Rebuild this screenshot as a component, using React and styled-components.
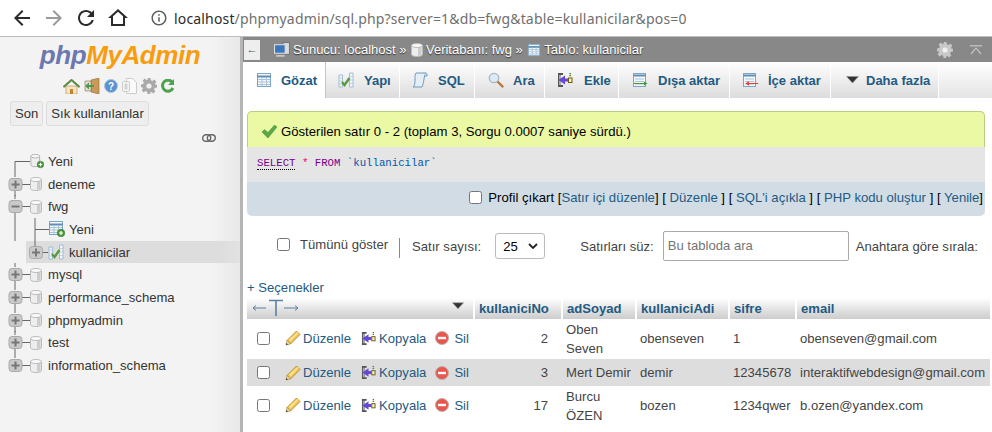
import { createGlobalStyle, styled } from "styled-components";

const Global = createGlobalStyle`
    html, body { margin: 0; padding: 0; background: #fff; }
    * { box-sizing: border-box; }
    #root { width: 992px; height: 432px; overflow: hidden; }
`;

const Page = styled.div`
    width: 992px;
    height: 432px;
    overflow: hidden;
    display: flex;
    flex-direction: column;
    font-family: "Liberation Sans", Arial, sans-serif;
    font-size: 13.1px;
    color: #444;
`;

const BrowserBar = styled.div`
    height: 37px;
    flex: none;
    display: flex;
    align-items: center;
    padding-left: 10px;
    background: #fff;
    border-bottom: 1px solid #bdbdbd;
`;

const NavIcon = styled.svg`
    width: ${p => p.$size}px;
    height: ${p => p.$size}px;
    margin-right: ${p => p.$gap}px;
    fill: ${p => p.$color || "#2b2b2b"};
    flex: none;
`;

const Address = styled.div`
    font-family: "Noto Sans", sans-serif;
    font-size: 14px;
    letter-spacing: 0.16px;
    color: #6f6f6f;
    white-space: nowrap;
    b { font-weight: 400; color: #2b2b2b; }
`;

const Body = styled.div`
    flex: 1;
    display: flex;
    min-height: 0;
`;

const Sidebar = styled.aside`
    width: 240px;
    flex: none;
    background: linear-gradient(to right, #f3f3f3 88%, #e8e8e8 100%);
    display: flex;
    flex-direction: column;
`;

const Logo = styled.div`
    text-align: center;
    font-size: 26px;
    font-weight: 700;
    font-style: italic;
    line-height: 30px;
    margin-top: 3px;
    letter-spacing: -0.4px;
    color: #f89c0e;
    span { color: #6c78af; }
`;

const QuickIcons = styled.div`
    display: flex;
    justify-content: center;
    align-items: center;
    gap: 4px;
    height: 20px;
    margin: 6px 4px 0 0;
    svg { flex: none; }
`;

const RecentRow = styled.div`
    display: flex;
    gap: 3px;
    padding: 5px 0 0 10px;
`;

const RecentButton = styled.div`
    height: 25px;
    line-height: 23px;
    padding: 0 4px;
    border: 1px solid #ddd;
    border-radius: 3px;
    background: #eee;
    color: #333;
`;

const LinkRow = styled.div`
    display: flex;
    justify-content: flex-end;
    padding: 8px 24px 0 0;
    height: 20px;
`;

const Tree = styled.div`
    margin-top: 4px;
`;

const TreeRow = styled.div`
    height: 22.7px;
    display: flex;
    align-items: center;
    color: #333;
    background: ${p => (p.$selected ? "linear-gradient(to right, #ddd 90%, #e2e2e2)" : "transparent")};
    margin-left: ${p => (p.$selected ? 26 : 0)}px;
`;

const Gutter = styled.svg`
    display: block;
    flex: none;
    height: 23px;
    width: ${p => p.width}px;
`;

const Label = styled.span`
    margin-left: ${p => p.$left}px;
`;

const Splitter = styled.div`
    width: 3px;
    flex: none;
    background: #b5b5b5;
`;

const Main = styled.main`
    flex: 1;
    min-width: 0;
    background: #fff;
    display: flex;
    flex-direction: column;
`;

const TopBar = styled.div`
    height: 25px;
    flex: none;
    background: #888;
    display: flex;
    align-items: center;
    color: #fff;
    font-size: 13px;
    text-shadow: 0 1px 1px #333;
`;

const BackBtn = styled.div`
    width: 16px;
    height: 20px;
    margin: 0 14px 0 1px;
    background: #eee;
    color: #555;
    text-shadow: none;
    text-align: center;
    line-height: 19px;
    font-size: 11px;
`;

const Crumb = styled.span`
    display: inline-flex;
    align-items: center;
    gap: 3px;
    margin-right: 4.5px;
    white-space: nowrap;
`;

const TopRight = styled.div`
    margin-left: auto;
    display: flex;
    align-items: center;
    gap: 17px;
    padding-right: 10px;
`;

const Tabs = styled.nav`
    height: 36px;
    flex: none;
    display: flex;
    background: linear-gradient(#fff, #e4e4e4);
`;

const Tab = styled.div`
    height: 36px;
    width: ${p => p.$w}px;
    flex: none;
    display: flex;
    align-items: center;
    padding-left: ${p => p.$left}px;
    gap: ${p => p.$gap}px;
    font-size: 13px;
    font-weight: 700;
    color: #235a81;
    white-space: nowrap;
    background: ${p => (p.$active ? "#fff" : "linear-gradient(#fff, #dcdcdc)")};
    border-right: ${p => (p.$active ? "1px solid #c4c4c4" : "1px solid #fff")};
`;

const Content = styled.div`
    padding: 13px 7px 0 4px;
    flex: 1;
`;

const Notice = styled.div`
    height: 36px;
    display: flex;
    align-items: center;
    gap: 4px;
    padding: 4px 0 0 14px;
    background: #ebf8a4;
    border: 1px solid #b9cc84;
    border-bottom: none;
    border-radius: 5px 5px 0 0;
    color: #000;
    font-size: 13.15px;
`;

const SqlBox = styled.div`
    height: 35px;
    padding: 9px 0 0 10px;
    background: #e5e5e5;
    font-family: "Liberation Mono", monospace;
    font-size: 10.7px;
    line-height: 14px;
    color: #000;
    white-space: pre;
`;

const Keyword = styled.span`
    color: #708;
    ${p => p.$dotted && "border-bottom: 1px dotted #000;"}
`;

const Star = styled.span`color: #e06;`;
const Quoted = styled.span`color: #05a;`;

const SqlLinks = styled.div`
    height: 34px;
    display: flex;
    align-items: center;
    justify-content: flex-end;
    gap: 6px;
    padding: 0 2px 4px 0;
    background: #d1dce5;
    border-radius: 0 0 5px 5px;
    color: #000;
    font-size: 13.15px;
    white-space: nowrap;
    a { color: #235a81; }
`;

const Check = styled.span`
    display: inline-block;
    width: 13px;
    height: 13px;
    flex: none;
    border: 1px solid #767676;
    border-radius: 2.5px;
    background: #fff;
`;

const Filters = styled.div`
    display: flex;
    align-items: center;
    height: 60px;
    padding-left: 30px;
    white-space: nowrap;
`;

const FilterGroup = styled.div`
    display: flex;
    align-items: center;
    gap: ${p => p.$gap}px;
    margin-left: ${p => p.$before || 0}px;
    margin-right: ${p => p.$after}px;
    margin-bottom: ${p => p.$lift || 0}px;
`;

const VLine = styled.span`
    width: 1px;
    height: 20px;
    margin-top: 3px;
    background: #888;
`;

const Select = styled.div`
    width: 50px;
    height: 26px;
    border: 1px solid #bbb;
    border-radius: 3px;
    display: flex;
    align-items: center;
    justify-content: space-between;
    padding: 0 6px 0 7px;
    color: #000;
`;

const SearchInput = styled.div`
    width: 186px;
    height: 30px;
    line-height: 28px;
    padding-left: 4px;
    border: 1px solid #aaa;
    border-radius: 2px;
    color: #757575;
`;

const Options = styled.div`
    height: 22px;
    line-height: 24px;
    color: #235a81;
`;

const Grid = styled.table`
    border-collapse: collapse;
    table-layout: fixed;
    width: 743px;
    color: #444;
`;

const Col = styled.col`
    width: ${p => (p.$w ? `${p.$w}px` : "auto")};
`;

const Th = styled.th`
    height: 21px;
    padding: 0 0 1px ${p => p.$pad ?? 4}px;
    text-align: left;
    font-weight: 700;
    color: #235a81;
    background: linear-gradient(#fff, #ccc);
    border-right: 2px solid #fff;
    &:last-child { border-right: none; }
`;

const Row = styled.tr`
    height: ${p => p.$h}px;
    background: ${p => (p.$odd ? "#ddd" : "#fff")};
`;

const Td = styled.td`
    padding: 0 ${p => (p.$num ? 14 : 0)}px ${p => (p.$lift ? 2 : 0)}px ${p => p.$pad ?? 4}px;
    line-height: 19px;
    text-align: ${p => (p.$num ? "right" : "left")};
    white-space: nowrap;
`;

const Actions = styled.div`
    display: flex;
    align-items: center;
    padding-left: 10px;
    color: #235a81;
`;

const Action = styled.span`
    display: inline-flex;
    align-items: center;
    gap: ${p => p.$gap}px;
    margin-left: ${p => p.$left}px;
`;

const ColTools = styled.div`
    display: flex;
    align-items: center;
    justify-content: space-between;
    padding: 0 9px 0 5px;
`;

const Sorter = styled.span`
    display: flex;
    margin-bottom: 5px;
`;

/* drawings */

const NAV = {
    back: "M20 11H7.83l5.59-5.59L12 4l-8 8 8 8 1.41-1.41L7.83 13H20v-2z",
    forward: "M4 11h12.17l-5.59-5.59L12 4l8 8-8 8-1.41-1.41L16.17 13H4v-2z",
    reload: "M17.65 6.35C16.2 4.9 14.21 4 12 4c-4.42 0-7.99 3.58-7.99 8s3.57 8 7.99 8c3.73 0 6.84-2.55 7.73-6h-2.08c-.82 2.33-3.04 4-5.65 4-3.31 0-6-2.69-6-6s2.69-6 6-6c1.66 0 3.14.69 4.22 1.78L13 11h7V4l-2.35 2.35z",
    home: "M12 5.69l5 4.5V18H7v-7.81l5-4.5M12 3L2 12h3v8h14v-8h3L12 3z",
    info: "M11 7h2v2h-2zm0 4h2v6h-2zm1-9C6.48 2 2 6.48 2 12s4.48 10 10 10 10-4.48 10-10S17.52 2 12 2zm0 18c-4.41 0-8-3.59-8-8s3.59-8 8-8 8 3.59 8 8-3.59 8-8 8z",
};

const Nav = ({ name, gap, color, size = 24 }) => (
    <NavIcon viewBox="0 0 24 24" $size={size} $gap={gap} $color={color}><path d={NAV[name]} /></NavIcon>
);

const Db = ({ size = 12 }) => (
    <svg width={size} height={size + 2} viewBox="0 0 12 14">
        <path d="M.5 2.5v9c0 1.2 2.4 2 5.5 2s5.500-.8 5.500-2v-9z" fill="#eee" stroke="#bbb" />
        <path d="M7 3.500h3.500v8.500l-3.500 1z" fill="#ccc" />
        <ellipse cx="6" cy="2.500" rx="5.500" ry="2" fill="#fafafa" stroke="#bbb" />
    </svg>
);

const PlusBadge = () => (
    <g>
        <circle cx="12" cy="12" r="3.800" fill="#4d9a3c" stroke="#2e6e22" strokeWidth=".5" />
        <path d="M12 10v4M10 12h4" stroke="#fff" strokeWidth="1.200" />
    </g>
);

const TableIcon = ({ size = 16 }) => (
    <svg width={size} height={size} viewBox="0 0 16 16">
        <rect x="1.500" y="1.500" width="13" height="13" fill="#f4f8fb" stroke="#7da5c4" />
        <path d="M1.500 4.500h13" stroke="#5d8fb5" strokeWidth="2" />
        <path d="M2 7.500h12M2 10h12M2 12.500h12M6 5v9M10.500 5v9" stroke="#a9c3d8" />
    </svg>
);

const TableNew = () => (
    <svg width="16" height="16" viewBox="0 0 16 16">
        <rect x=".500" y=".500" width="13" height="13" fill="#f4f8fb" stroke="#7da5c4" />
        <path d="M.500 3.500h13" stroke="#5d8fb5" strokeWidth="2" />
        <path d="M1 6.500h12M1 9h12M1 11.500h12M5 4v9M9.500 4v9" stroke="#a9c3d8" />
        <PlusBadge />
    </svg>
);

const DbNew = () => (
    <svg width="14" height="16" viewBox="0 0 16 16">
        <path d="M1 2.500v10c0 1.200 2.200 2 5 2s5-.8 5-2v-10z" fill="#eee" stroke="#aaa" />
        <ellipse cx="6" cy="2.500" rx="5" ry="2" fill="#fafafa" stroke="#aaa" />
        <PlusBadge />
    </svg>
);

const Structure = ({ size = 16 }) => (
    <svg width={size} height={size} viewBox="0 0 16 16">
        <path d="M1 3h3.500v12H1zM11.500 1H15v14h-3.500z" fill="#f2f6fa" stroke="#8fb2cd" strokeWidth=".8" />
        <path d="M1 6h3.500M1 9h3.500M1 12h3.500M11.500 4.500H15M11.500 8H15M11.500 11.500H15" stroke="#b3cadb" strokeWidth=".8" />
        <path d="M4 10l2.500 3L11.500 6" fill="none" stroke="#5b9a3f" strokeWidth="2.400" />
    </svg>
);

const Scroll = () => (
    <svg width="17" height="16" viewBox="0 0 17 16">
        <path d="M4 1h10c-1 1-1.500 3-2 6s-1 6-2 8H1c1.500-1 2-3 2-7s0-6 1-7z" fill="#e4eef6" stroke="#6f9bbd" />
        <path d="M13.500 1c1 0 2 1 1.500 3h-2.500" fill="#cfe0ec" stroke="#6f9bbd" />
    </svg>
);

const Magnifier = () => (
    <svg width="16" height="16" viewBox="0 0 16 16">
        <path d="M9.500 9.500l5 5" stroke="#b5763f" strokeWidth="2.400" strokeLinecap="round" />
        <circle cx="6" cy="6" r="4.700" fill="#dcebf6" stroke="#a7b6c2" strokeWidth="1.300" />
    </svg>
);

const InsertIcon = ({ size = 16 }) => (
    <svg width={size} height={size} viewBox="0 0 16 16">
        <path d="M1 1h5v2H4v10h2v2H1z" fill="#555" />
        <path d="M2 3h2v10H2z" fill="#aaa" />
        <path d="M1.500 8L8 3.500V6.500h3v3H8v3z" fill="#6548d6" />
        <rect x="11.500" y="6" width="3.500" height="4.500" fill="#f7efc0" stroke="#6b5c10" />
        <path d="M13.200 1v3.500" stroke="#3f7f2a" strokeWidth="1.500" strokeDasharray="1.200 .8" />
    </svg>
);

const ExportIcon = ({ arrow, back }) => (
    <svg width="16" height="16" viewBox="0 0 16 16">
        <rect x="1.500" y="1.500" width="12" height="13" fill="#f4f8fb" stroke="#7da5c4" />
        <path d="M1.500 3.500h12" stroke="#5d8fb5" strokeWidth="2" />
        <path d="M3 7h9M3 9.500h9M3 12h9" stroke="#a9c3d8" />
        {back
            ? <path d="M16 11H7V9.200L3.500 11.500 7 13.800V12h9z" fill={arrow} />
            : <path d="M2 11h10V9.500l3.500 2-3.500 2V12H2z" fill={arrow} />}
    </svg>
);

const Triangle = ({ w = 13 }) => (
    <svg width={w} height="8" viewBox="0 0 13 8">
        <path d="M.5 .5h12L6.500 7z" fill="#333" stroke="#999" strokeWidth=".6" />
    </svg>
);

const Pencil = () => (
    <svg width="16" height="16" viewBox="0 0 16 16">
        <path d="M2 10.500L11.500 1l3.500 3.500L5.500 14z" fill="#f2c44e" stroke="#a9802a" strokeWidth=".8" />
        <path d="M4 9.500L12.500 2l1 1L5.500 11.500z" fill="#fbe393" />
        <path d="M1 15l1-4.500 3.500 3.500z" fill="#ecdcbc" stroke="#a9802a" strokeWidth=".6" />
        <path d="M1 15l.5-2 1.500 1.500z" fill="#333" />
    </svg>
);

const Minus = () => (
    <svg width="14" height="14" viewBox="0 0 14 14">
        <circle cx="7" cy="7" r="6.500" fill="#e8574d" stroke="#b9b0ae" />
        <rect x="3" y="5.800" width="8" height="2.400" fill="#fff" />
    </svg>
);

const CheckMark = () => (
    <svg width="15" height="13" viewBox="0 0 15 13">
        <path d="M0 7l2.500-2.500L6 7.500 12.500 0 15 2 6 13z" fill="#5aa846" stroke="#468a36" strokeWidth=".5" />
    </svg>
);

const Cog = ({ fill = "#bbb", size = 16 }) => (
    <svg width={size} height={size} viewBox="0 0 16 16">
        <path d="M6.500 0h3l.4 2.300 1.500.6L13.300 1.600l2.100 2.100-1.300 1.900.6 1.500L16 6.500v3l-2.300.4-.6 1.500 1.300 1.900-2.100 2.100-1.900-1.300-1.500.6L9.500 16h-3l-.4-2.300-1.500-.6-1.900 1.300-2.100-2.100 1.300-1.900-.6-1.500L0 9.500v-3l2.300-.4.600-1.500L1.600 2.700l2.100-2.100 1.900 1.300 1.500-.6z" fill={fill} />
        <circle cx="8" cy="8" r="2.600" fill="#f0f0f0" />
    </svg>
);

const Quick = {
    home: (
        <svg width="17" height="15" viewBox="0 0 17 15">
            <path d="M3 7h11v8H3z" fill="#f4e5c2" stroke="#b0884c" strokeWidth=".6" />
            <path d="M7 10h3v5H7z" fill="#c9812c" />
            <path d="M8.500 0L0 7.500l1 1 7.500-6.500L16 8.500l1-1z" fill="#5c8f3f" stroke="#3e6b29" strokeWidth=".5" />
        </svg>
    ),
    logout: (
        <svg width="16" height="16" viewBox="0 0 16 16">
            <path d="M7 2l8-2v16l-8-2z" fill="#c99a58" stroke="#8d6a34" strokeWidth=".6" />
            <path d="M1 3h6v10H1z" fill="#eadcc0" stroke="#7b7b5e" strokeWidth=".6" />
            <path d="M1 8l4-3.500V7h5v2H5v2.500z" fill="#4c9a55" />
        </svg>
    ),
    help: (
        <svg width="14" height="14" viewBox="0 0 14 14">
            <circle cx="7" cy="7" r="6.500" fill="#5d92cf" stroke="#a9c4e2" />
            <text x="7" y="11" textAnchor="middle" fontSize="10" fontWeight="700" fill="#fff" fontFamily="Liberation Sans">?</text>
        </svg>
    ),
    doc: (
        <svg width="15" height="16" viewBox="0 0 15 16">
            <path d="M4.500 .5h6l4 4v11h-10z" fill="#fafafa" stroke="#ccc" />
            <rect x=".5" y="3.500" width="7" height="10" rx="1" fill="#f3f3f3" stroke="#ccc" />
            <path d="M3 6v5h2V6z" fill="#ddd" stroke="#bbb" strokeWidth=".5" />
        </svg>
    ),
    reload: (
        <svg width="13" height="14" viewBox="0 0 13 14">
            <path d="M11.500 3.500A5.500 5.500 0 1 0 12 9" fill="none" stroke="#4ea24e" strokeWidth="3" />
            <path d="M7 6h6V0z" fill="#4ea24e" />
        </svg>
    ),
};

const ChainLink = () => (
    <svg width="14" height="8" viewBox="0 0 14 8">
        <rect x=".7" y=".7" width="8" height="6.600" rx="3.300" fill="none" stroke="#666" strokeWidth="1.400" />
        <rect x="5.300" y=".7" width="8" height="6.600" rx="3.300" fill="none" stroke="#666" strokeWidth="1.400" />
    </svg>
);

const ServerIcon = () => (
    <svg width="16" height="15" viewBox="0 0 15 14">
        <rect x="8.500" y=".5" width="6" height="11" fill="#ddd" stroke="#777" />
        <rect x=".5" y="2.500" width="10" height="8" fill="#3d77bb" stroke="#ddd" />
        <path d="M2 13h8" stroke="#ccc" strokeWidth="1.500" />
    </svg>
);

const ExpanderPath = ({ x, y, open }) => (
    <g>
        <rect x={x - 6.500} y={y - 6} width="13" height="12" rx="3" fill="#c9c9c9" stroke="#aaa" />
        <path d={open ? `M${x - 4} ${y}h8` : `M${x - 4} ${y}h8M${x} ${y - 4}v8`} stroke="#777" strokeWidth="2" />
    </g>
);

const DbTreeRow = ({ label, open, last }) => (
    <TreeRow>
        <Gutter width="30" viewBox="0 0 30 23">
            <path d={`M15 0V4M15 18V${last ? 12 : 23}`} stroke="#666" fill="none" />
            <path d="M22 11.500h8" stroke="#666" />
            <ExpanderPath x={15.500} y={11.500} open={open} />
        </Gutter>
        <Db />
        <Label $left={6}>{label}</Label>
    </TreeRow>
);

const rows = [
    { id: 2, name: ["Oben", "Seven"], user: "obenseven", pass: "1", mail: "obenseven@gmail.com", h: 40, tall: true },
    { id: 3, name: ["Mert Demir"], user: "demir", pass: "12345678", mail: "interaktifwebdesign@gmail.com", h: 27, odd: true },
    { id: 17, name: ["Burcu", "ÖZEN"], user: "bozen", pass: "1234qwer", mail: "b.ozen@yandex.com", h: 40, tall: true },
];

const tabs = [
    { label: "Gözat", w: 83, left: 13, gap: 9, icon: <TableIcon />, active: true },
    { label: "Yapı", w: 74, left: 12, gap: 10, icon: <Structure /> },
    { label: "SQL", w: 75, left: 12, gap: 9, icon: <Scroll /> },
    { label: "Ara", w: 70, left: 13, gap: 9, icon: <Magnifier /> },
    { label: "Ekle", w: 74, left: 12, gap: 11, icon: <InsertIcon /> },
    { label: "Dışa aktar", w: 111, left: 13, gap: 10, icon: <ExportIcon arrow="#3f9a3f" /> },
    { label: "İçe aktar", w: 101, left: 12, gap: 10, icon: <ExportIcon arrow="#d8423a" back /> },
    { label: "Daha fazla", w: 108, left: 15, gap: 7, icon: <Triangle /> },
];

const App = () => (
    <Page>
        <Global />
        <BrowserBar>
            <Nav name="back" gap={8} />
            <Nav name="forward" gap={8} color="#9a9a9a" />
            <Nav name="reload" gap={8} />
            <Nav name="home" gap={20} />
            <Nav name="info" size={18} gap={6} color="#5f5f5f" />
            <Address><b>localhost</b>/phpmyadmin/sql.php?server=1&amp;db=fwg&amp;table=kullanicilar&amp;pos=0</Address>
        </BrowserBar>
        <Body>
            <Sidebar>
                <Logo><span>php</span>MyAdmin</Logo>
                <QuickIcons>
                    {Quick.home}
                    {Quick.logout}
                    {Quick.help}
                    {Quick.doc}
                    <Cog fill="#aaa" />
                    {Quick.reload}
                </QuickIcons>
                <RecentRow>
                    <RecentButton>Son</RecentButton>
                    <RecentButton>Sık kullanılanlar</RecentButton>
                </RecentRow>
                <LinkRow><ChainLink /></LinkRow>
                <Tree>
                    <TreeRow>
                        <Gutter width="30" viewBox="0 0 30 23">
                            <path d="M15 23V11.500H30" stroke="#666" fill="none" />
                        </Gutter>
                        <DbNew />
                        <Label $left={4}>Yeni</Label>
                    </TreeRow>
                    <DbTreeRow label="deneme" />
                    <DbTreeRow label="fwg" open />
                    <TreeRow>
                        <Gutter width="49" viewBox="0 0 49 23">
                            <path d="M15 0V23M35 0V11.500H49M35 11.500V23" stroke="#666" fill="none" />
                        </Gutter>
                        <TableNew />
                        <Label $left={4}>Yeni</Label>
                    </TreeRow>
                    <TreeRow $selected>
                        <Gutter width="22" viewBox="0 0 22 23">
                            <path d="M9 0V5M16 11.500H22" stroke="#666" fill="none" />
                            <ExpanderPath x={10} y={11.500} />
                        </Gutter>
                        <Structure />
                        <Label $left={5}>kullanicilar</Label>
                    </TreeRow>
                    <DbTreeRow label="mysql" />
                    <DbTreeRow label="performance_schema" />
                    <DbTreeRow label="phpmyadmin" />
                    <DbTreeRow label="test" />
                    <DbTreeRow label="information_schema" last />
                </Tree>
            </Sidebar>
            <Splitter />
            <Main>
                <TopBar>
                    <BackBtn>←</BackBtn>
                    <Crumb><ServerIcon />Sunucu: localhost »</Crumb>
                    <Crumb><Db size={12} />Veritabanı: fwg »</Crumb>
                    <Crumb><TableIcon size={14} />Tablo: kullanicilar</Crumb>
                    <TopRight>
                        <Cog fill="#c8c8c8" />
                        <svg width="12" height="10" viewBox="0 0 12 10">
                            <path d="M0 .75h12M6 3L1 9M6 3l5 6" stroke="#bbb" strokeWidth="1.500" fill="none" />
                        </svg>
                    </TopRight>
                </TopBar>
                <Tabs>
                    {tabs.map(t => (
                        <Tab key={t.label} $w={t.w} $left={t.left} $gap={t.gap} $active={t.active}>
                            {t.icon}{t.label}
                        </Tab>
                    ))}
                </Tabs>
                <Content>
                    <Notice><CheckMark />Gösterilen satır 0 - 2 (toplam 3, Sorgu 0.0007 saniye sürdü.)</Notice>
                    <SqlBox>
                        <Keyword $dotted>SELECT</Keyword> <Star>*</Star> <Keyword>FROM</Keyword> <Quoted>`kullanicilar`</Quoted>
                    </SqlBox>
                    <SqlLinks>
                        <Check />
                        <span>Profil çıkart [<a>Satır içi düzenle</a>] [ <a>Düzenle</a> ] [ <a>SQL'i açıkla</a> ] [ <a>PHP kodu oluştur</a> ] [ <a>Yenile</a>]</span>
                    </SqlLinks>
                    <Filters>
                        <FilterGroup $gap={10} $after={11} $lift={4}><Check />Tümünü göster</FilterGroup>
                        <VLine />
                        <FilterGroup $gap={14} $after={35} $before={12}>
                            Satır sayısı:
                            <Select>25 <svg width="10" height="6" viewBox="0 0 10 6"><path d="M1 1l4 4 4-4" fill="none" stroke="#222" strokeWidth="1.800" /></svg></Select>
                        </FilterGroup>
                        <FilterGroup $gap={9} $after={7}>
                            Satırları süz:
                            <SearchInput>Bu tabloda ara</SearchInput>
                        </FilterGroup>
                        Anahtara göre sırala:
                    </Filters>
                    <Options>+ Seçenekler</Options>
                    <Grid>
                        <colgroup>
                            <Col $w={227} />
                            <Col $w={88} />
                            <Col $w={74} />
                            <Col $w={93} />
                            <Col $w={67} />
                            <Col />
                        </colgroup>
                        <thead>
                            <tr>
                                <Th $pad={0}>
                                    <ColTools>
                                        <svg width="48" height="18" viewBox="0 0 48 18">
                                            <path d="M1 9h13M1 9l3-2.500M1 9l3 2.500M32 9h14M46 9l-3-2.500M46 9l-3 2.500" stroke="#5d7fa5" fill="none" />
                                            <path d="M17 1.500h14M24 1.500V17" stroke="#5d7fa5" strokeWidth="1.600" fill="none" />
                                        </svg>
                                        <Sorter><Triangle w={12} /></Sorter>
                                    </ColTools>
                                </Th>
                                <Th>kullaniciNo</Th>
                                <Th>adSoyad</Th>
                                <Th>kullaniciAdi</Th>
                                <Th>sifre</Th>
                                <Th>email</Th>
                            </tr>
                        </thead>
                        <tbody>
                            {rows.map(r => (
                                <Row key={r.id} $h={r.h} $odd={r.odd}>
                                    <Td $pad={0} $lift={r.tall}>
                                        <Actions>
                                            <Check />
                                            <Action $left={15} $gap={2}><Pencil />Düzenle</Action>
                                            <Action $left={10} $gap={3}><InsertIcon size={15} />Kopyala</Action>
                                            <Action $left={9} $gap={5}><Minus />Sil</Action>
                                        </Actions>
                                    </Td>
                                    <Td $num $lift={r.tall}>{r.id}</Td>
                                    <Td>{r.name.map(n => <div key={n}>{n}</div>)}</Td>
                                    <Td $lift={r.tall}>{r.user}</Td>
                                    <Td $lift={r.tall}>{r.pass}</Td>
                                    <Td $lift={r.tall}>{r.mail}</Td>
                                </Row>
                            ))}
                        </tbody>
                    </Grid>
                </Content>
            </Main>
        </Body>
    </Page>
);

export default App;
